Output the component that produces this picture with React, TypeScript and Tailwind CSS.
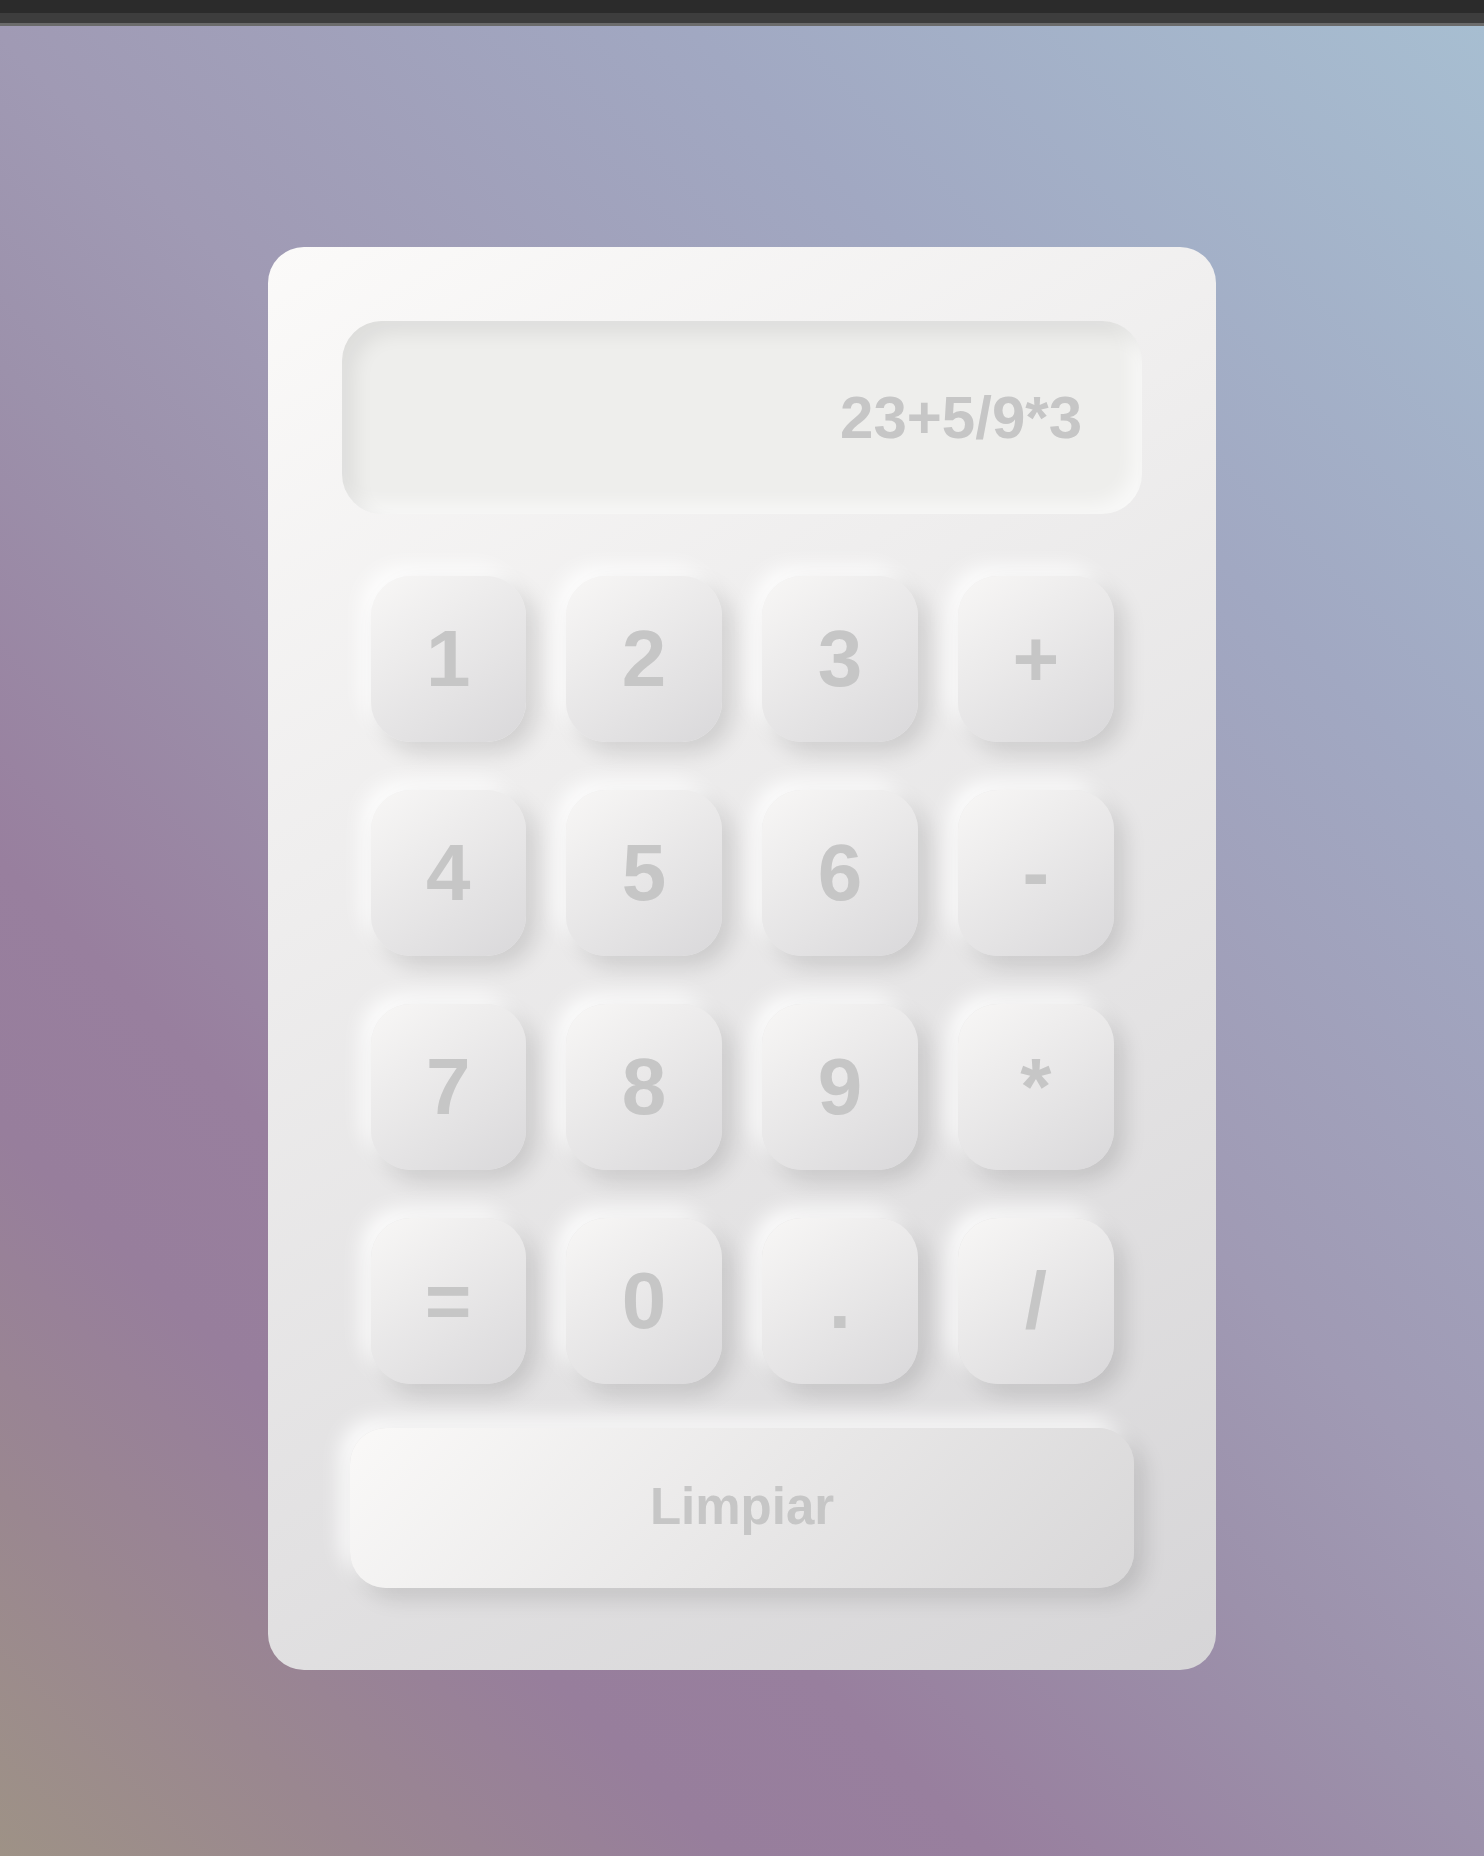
import React, { useState } from 'react'

const keys = ['1', '2', '3', '+', '4', '5', '6', '-', '7', '8', '9', '*', '=', '0', '.', '/']

const App: React.FC = () => {
    const [expr, setExpr] = useState('23+5/9*3')

    const press = (k: string) => {
        if (k === '=') {
            try {
                // eslint-disable-next-line no-new-func
                const result = Function(`return (${expr})`)()
                setExpr(String(result))
            } catch {
                setExpr('Error')
            }
            return
        }
        setExpr(expr + k)
    }

    return (
        <div className="min-h-screen font-['Liberation_Sans',Arial,sans-serif]">
            {/* browser chrome strip */}
            <div className="h-[13px] bg-[#2b2b2b]" />
            <div className="h-[10px] bg-[#3d3d3d]" />
            <div className="h-[3px] bg-[#6b6b6b]" />

            <main className="h-[1830px] pt-[221px] bg-[linear-gradient(45deg,#9e9286_0%,#9a8790_11%,#977e9c_22%,#987f9e_30%,#9c91ab_45%,#a09ab4_55%,#a1a8c2_76%,#a7bed1_100%)]">
                <div className="mx-auto w-[948px] rounded-[36px] px-[74px] pt-[74px] pb-[82px] bg-[linear-gradient(150deg,#fbfaf9_0%,#d6d5d7_100%)]">
                    <div className="flex h-[193px] items-center justify-end rounded-[40px] bg-[#eeeeec] pr-[60px] text-[60px] font-bold text-[#c6c6c6] shadow-[inset_12px_12px_20px_rgba(0,0,0,0.07),inset_-10px_-10px_18px_rgba(255,255,255,0.6)]">
                        {expr}
                    </div>

                    <div className="mx-[28.5px] mt-[62px] grid grid-cols-4 gap-x-[40.5px] gap-y-[48.5px]">
                        {keys.map((k) => (
                            <button
                                key={k}
                                onClick={() => press(k)}
                                className="flex h-[165.5px] items-center justify-center rounded-[40px] bg-[linear-gradient(145deg,#f8f7f6_0%,#d9d8da_100%)] text-[80px] font-bold text-[#c6c6c6] shadow-[10px_10px_22px_rgba(0,0,0,0.13),-10px_-10px_20px_rgba(255,255,255,0.85)]"
                            >
                                {k}
                            </button>
                        ))}
                    </div>

                    <button
                        onClick={() => setExpr('')}
                        className="mx-[8px] mt-[44px] flex h-[160px] w-[784px] items-center justify-center rounded-[36px] bg-[linear-gradient(135deg,#faf9f8_0%,#d8d7d8_100%)] text-[51px] font-bold text-[#c6c6c6] shadow-[10px_10px_22px_rgba(0,0,0,0.13),-10px_-10px_20px_rgba(255,255,255,0.85)]"
                    >
                        Limpiar
                    </button>
                </div>
            </main>
        </div>
    )
}

export default App
